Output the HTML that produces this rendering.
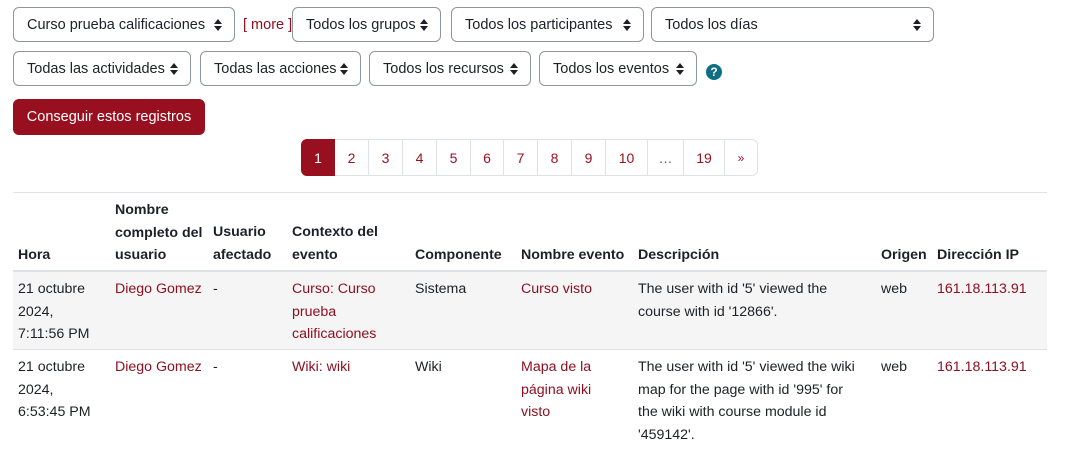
<!DOCTYPE html>
<html><head><meta charset="utf-8"><style>
*{margin:0;padding:0;box-sizing:border-box}
body{width:1077px;height:449px;overflow:hidden;background:#fff;font-family:"Liberation Sans",sans-serif;font-size:14px;color:#1d2125;position:relative}
.a{position:absolute;white-space:nowrap}
.sel{position:absolute;height:35px;border:1px solid #8f959e;border-radius:6px;line-height:35px;padding-left:13px;font-size:14.5px;color:#1d2125}
.sel:after{content:"";position:absolute;right:12px;top:11px;width:0;height:0;border-left:4px solid transparent;border-right:4px solid transparent;border-bottom:5px solid #1d2125}
.sel:before{content:"";position:absolute;right:12px;top:18px;width:0;height:0;border-left:4px solid transparent;border-right:4px solid transparent;border-top:5px solid #1d2125}
.pg{position:absolute;top:139px;height:37px;border:1px solid #dee2e6;border-left:none;line-height:37px;text-align:center;color:#98101f;font-size:14px}
.lk{color:#8e1020}
.t{position:absolute;line-height:22.5px;font-size:14.2px}
.h{font-weight:bold}
</style></head><body>
<div class="sel" style="left:13px;top:7px;width:222px">Curso prueba calificaciones</div>
<div class="a" style="left:243px;top:17px;font-size:14.5px;color:#8e1020">[ more ]</div>
<div class="sel" style="left:292px;top:7px;width:149px">Todos los grupos</div>
<div class="sel" style="left:451px;top:7px;width:193px">Todos los participantes</div>
<div class="sel" style="left:651px;top:7px;width:283px">Todos los días</div>
<div class="sel" style="left:13px;top:51px;width:178px">Todas las actividades</div>
<div class="sel" style="left:200px;top:51px;width:161px">Todas las acciones</div>
<div class="sel" style="left:369px;top:51px;width:162px">Todos los recursos</div>
<div class="sel" style="left:539px;top:51px;width:158px">Todos los eventos</div>
<div class="a" style="left:706px;top:64px;width:16px;height:16px;border-radius:50%;background:#0f6e84;color:#fff;font-weight:bold;font-size:12px;text-align:center;line-height:16px">?</div>
<div class="a" style="left:13px;top:99px;width:192px;height:36px;background:#98101f;border-radius:6px;color:#fff;font-size:14.5px;line-height:37px;text-align:center">Conseguir estos registros</div>
<div class="pg" style="left:301px;width:34px;background:#98101f;color:#fff;border:1px solid #98101f;border-radius:6px 0 0 6px">1</div>
<div class="pg" style="left:335px;width:34px">2</div>
<div class="pg" style="left:369px;width:34px">3</div>
<div class="pg" style="left:403px;width:34px">4</div>
<div class="pg" style="left:437px;width:34px">5</div>
<div class="pg" style="left:471px;width:33px">6</div>
<div class="pg" style="left:504px;width:34px">7</div>
<div class="pg" style="left:538px;width:34px">8</div>
<div class="pg" style="left:572px;width:34px">9</div>
<div class="pg" style="left:606px;width:42px">10</div>
<div class="pg" style="left:648px;width:36px;color:#555">…</div>
<div class="pg" style="left:684px;width:41px">19</div>
<div class="pg" style="left:725px;width:33px;border-radius:0 6px 6px 0;font-size:12px">»</div>
<div class="a" style="left:13px;top:192px;width:1034px;height:1px;background:#dee2e6"></div>
<div class="a" style="left:13px;top:270px;width:1034px;height:2px;background:#dee2e6"></div>
<div class="a" style="left:13px;top:272px;width:1034px;height:77px;background:#f5f5f5"></div>
<div class="a" style="left:13px;top:349px;width:1034px;height:1px;background:#dee2e6"></div>
<div class="t h" style="left:18px;top:244px">Hora</div>
<div class="t h" style="left:115px;top:199px">Nombre<br>completo del<br>usuario</div>
<div class="t h" style="left:213px;top:221px">Usuario<br>afectado</div>
<div class="t h" style="left:292px;top:221px">Contexto del<br>evento</div>
<div class="t h" style="left:415px;top:244px">Componente</div>
<div class="t h" style="left:521px;top:244px">Nombre evento</div>
<div class="t h" style="left:638px;top:244px">Descripción</div>
<div class="t h" style="left:881px;top:244px">Origen</div>
<div class="t h" style="left:937px;top:244px">Dirección IP</div>
<div class="t" style="left:18px;top:278px">21 octubre<br>2024,<br>7:11:56 PM</div>
<div class="t lk" style="left:115px;top:278px">Diego Gomez</div>
<div class="t" style="left:213px;top:278px">-</div>
<div class="t lk" style="left:292px;top:278px">Curso: Curso<br>prueba<br>calificaciones</div>
<div class="t" style="left:415px;top:278px">Sistema</div>
<div class="t lk" style="left:521px;top:278px">Curso visto</div>
<div class="t" style="left:638px;top:278px">The user with id '5' viewed the<br>course with id '12866'.</div>
<div class="t" style="left:881px;top:278px">web</div>
<div class="t lk" style="left:937px;top:278px">161.18.113.91</div>
<div class="t" style="left:18px;top:356px">21 octubre<br>2024,<br>6:53:45 PM</div>
<div class="t lk" style="left:115px;top:356px">Diego Gomez</div>
<div class="t" style="left:213px;top:356px">-</div>
<div class="t lk" style="left:292px;top:356px">Wiki: wiki</div>
<div class="t" style="left:415px;top:356px">Wiki</div>
<div class="t lk" style="left:521px;top:356px">Mapa de la<br>página wiki<br>visto</div>
<div class="t" style="left:638px;top:356px">The user with id '5' viewed the wiki<br>map for the page with id '995' for<br>the wiki with course module id<br>'459142'.</div>
<div class="t" style="left:881px;top:356px">web</div>
<div class="t lk" style="left:937px;top:356px">161.18.113.91</div>
</body></html>
